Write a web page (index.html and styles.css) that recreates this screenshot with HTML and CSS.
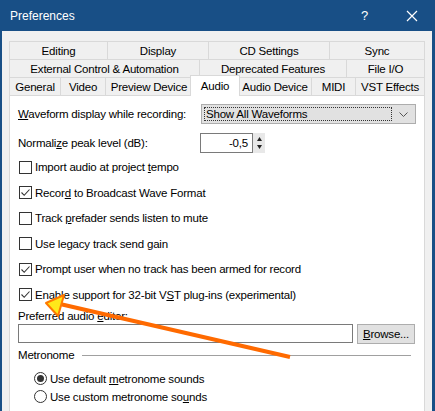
FILE: index.html
```html
<!DOCTYPE html>
<html>
<head>
<meta charset="utf-8">
<link rel="stylesheet" href="styles.css">
</head>
<body>
<div class="window">
  <div class="titlebar">
    <span class="title">Preferences</span>
    <span class="help">?</span>
    <svg class="close" width="12" height="12" viewBox="0 0 12 12"><path d="M1 1L11 11M11 1L1 11" stroke="#fff" stroke-width="1.2" fill="none"/></svg>
  </div>
  <div class="client">
    <div class="tabs">
      <div class="tabrow r1">
        <div class="tab">Editing</div>
        <div class="tab">Display</div>
        <div class="tab">CD Settings</div>
        <div class="tab last">Sync</div>
      </div>
      <div class="tabrow r2">
        <div class="tab">External Control &amp; Automation</div>
        <div class="tab">Deprecated Features</div>
        <div class="tab last">File I/O</div>
      </div>
      <div class="tabrow r3">
        <div class="tab">General</div>
        <div class="tab">Video</div>
        <div class="tab">Preview Device</div>
        <div class="tab sel">Audio</div>
        <div class="tab">Audio Device</div>
        <div class="tab">MIDI</div>
        <div class="tab last">VST Effects</div>
      </div>
    </div>
    <div class="panel">
      <div class="row wave">
        <span class="lbl"><u>W</u>aveform display while recording:</span>
        <div class="select">
          <span class="focus">Show All Waveforms</span>
          <svg class="chev" width="9" height="5" viewBox="0 0 9 5"><path d="M0.5 0.5L4.5 4.5L8.5 0.5" stroke="#555" fill="none"/></svg>
        </div>
      </div>
      <div class="row norm">
        <span class="lbl">Normali<u>z</u>e peak level (dB):</span>
        <div class="num">-0,5</div>
        <div class="spin">
          <svg width="5" height="4" viewBox="0 0 5 4"><path d="M0 4L2.5 0L5 4Z" fill="#222"/></svg>
          <svg width="5" height="4" viewBox="0 0 5 4"><path d="M0 0L2.5 4L5 0Z" fill="#222"/></svg>
        </div>
      </div>
      <div class="checks">
        <div class="chk"><span class="box"></span><span>Import audio at project <u>t</u>empo</span></div>
        <div class="chk"><span class="box on"><svg width="11" height="11" viewBox="0 0 11 11"><path d="M1.5 5.5L4.2 8.3L9.5 2.5" stroke="#333" stroke-width="1.1" fill="none"/></svg></span><span>Recor<u>d</u> to Broadcast Wave Format</span></div>
        <div class="chk"><span class="box"></span><span>Track <u>p</u>refader sends listen to mute</span></div>
        <div class="chk"><span class="box"></span><span>Use le<u>g</u>acy track send gain</span></div>
        <div class="chk"><span class="box on"><svg width="11" height="11" viewBox="0 0 11 11"><path d="M1.5 5.5L4.2 8.3L9.5 2.5" stroke="#333" stroke-width="1.1" fill="none"/></svg></span><span>Prompt user when no track has been armed for record</span></div>
        <div class="chk"><span class="box on"><svg width="11" height="11" viewBox="0 0 11 11"><path d="M1.5 5.5L4.2 8.3L9.5 2.5" stroke="#333" stroke-width="1.1" fill="none"/></svg></span><span>Enable support for 32-bit V<u>S</u>T plug-ins (experimental)</span></div>
      </div>
      <div class="pref-lbl">Preferred audio <u>e</u>ditor:</div>
      <div class="row editor">
        <div class="textbox"></div>
        <div class="btn"><u>B</u>rowse...</div>
      </div>
      <div class="group">
        <span>Metronome</span>
        <span class="gline"></span>
      </div>
      <div class="radios">
        <div class="rad"><span class="circ on"></span><span>Use default <u>m</u>etronome sounds</span></div>
        <div class="rad"><span class="circ"></span><span>Use custom metronome so<u>u</u>nds</span></div>
      </div>
    </div>
  </div>
  <svg class="arrow" width="435" height="411" viewBox="0 0 435 411">
    <line x1="290" y1="357" x2="60" y2="304" stroke="#FF6A00" stroke-width="4"/>
    <path d="M46 303L64 295L58 316Z" fill="#FFE81A" stroke="#FF7A00" stroke-width="2" stroke-linejoin="round"/>
  </svg>
</div>
</body>
</html>
```

FILE: styles.css
```css
* { box-sizing: border-box; }
html, body { margin: 0; padding: 0; }
body {
  font-family: "Liberation Sans", Arial, sans-serif;
  font-size: 11.5px;
  letter-spacing: -0.2px;
  color: #000;
  background: #fff;
}
.window {
  position: relative;
  width: 435px;
  height: 411px;
  overflow: hidden;
  background: #184F86;
  display: flex;
  flex-direction: column;
}
.titlebar {
  height: 31px;
  flex: none;
  display: flex;
  align-items: center;
  color: #fff;
  padding-left: 10px;
}
.title { font-size: 12px; flex: 1; letter-spacing: 0; }
.help { font-size: 13px; margin-right: 38px; }
.close { margin-right: 17px; }
.client {
  flex: 1;
  background: #F0F0F0;
  margin: 0 3px 0 2px;
  padding-top: 10px;
  padding-left: 7px;
}
.tabs { width: 416px; }
.tabrow {
  display: grid;
  height: 18px;
}
.r1 { grid-template-columns: 98px 101px 121px 96px; }
.r2 { grid-template-columns: 190px 147px 79px; }
.r3 { grid-template-columns: 51px 45px 87px 46px 73px 44px 70px; }
.tab {
  border-top: 1px solid #D9D9D9;
  border-left: 1px solid #D9D9D9;
  display: flex;
  align-items: center;
  justify-content: center;
  white-space: nowrap;
  background: #F0F0F0;
}
.tab.last { border-right: 1px solid #D9D9D9; }
.tab.sel {
  position: relative;
  z-index: 2;
  background: #fff;
  margin: -2px -2px -1px -2px;
  border: 1px solid #D9D9D9;
  border-bottom: none;
  padding-bottom: 1px;
}
.panel {
  width: 416px;
  height: 340px;
  background: #fff;
  border: 1px solid #D9D9D9;
  padding: 8px 0 0 8px;
}
.row { display: flex; align-items: center; }
.wave { height: 20px; }
.wave .lbl { width: 183px; }
.select {
  width: 215px;
  height: 20px;
  background: #E1E1E1;
  border: 1px solid #ADADAD;
  display: flex;
  align-items: center;
  padding: 2px;
}
.focus {
  flex: 1;
  height: 14px;
  border: 1px dotted #333;
  display: flex;
  align-items: center;
  padding-left: 1px;
}
.chev { margin: 0 5px 0 7px; }
.norm { height: 20px; margin-top: 9px; }
.norm .lbl { width: 182px; }
.num {
  width: 53px;
  height: 20px;
  border: 1px solid #7A7A7A;
  text-align: right;
  padding: 3px 4px 0 0;
}
.spin {
  width: 12px;
  height: 20px;
  background: #E8E8E8;
  display: flex;
  flex-direction: column;
  align-items: center;
  justify-content: center;
  gap: 4px;
}
.checks { margin-top: 1.5px; }
.chk {
  height: 25.5px;
  display: flex;
  align-items: center;
}
.box {
  width: 13px;
  height: 13px;
  border: 1px solid #333;
  background: #fff;
  margin-left: 1px;
  margin-right: 3px;
  display: flex;
  align-items: center;
  justify-content: center;
}
.pref-lbl { line-height: 15px; margin-top: 1px; }
.editor { margin-top: 0; height: 20px; }
.textbox {
  width: 335px;
  height: 19px;
  border: 1px solid #7A7A7A;
  margin-right: 4px;
}
.btn {
  width: 58px;
  height: 20px;
  background: #E1E1E1;
  border: 1px solid #ADADAD;
  display: flex;
  align-items: center;
  justify-content: center;
}
.group {
  display: flex;
  align-items: center;
  height: 15px;
  margin-top: 4px;
}
.gline {
  flex: none;
  width: 329px;
  height: 1px;
  background: #A0A0A0;
  margin-left: 8px;
}
.radios { margin-top: 7px; padding-left: 16px; }
.rad {
  height: 18px;
  display: flex;
  align-items: center;
}
.circ {
  width: 13px;
  height: 13px;
  border: 1px solid #333;
  border-radius: 50%;
  margin-right: 3px;
  display: flex;
  align-items: center;
  justify-content: center;
}
.circ.on::after {
  content: "";
  width: 7px;
  height: 7px;
  border-radius: 50%;
  background: #333;
}
u { text-decoration: underline; text-underline-offset: 1px; }
.arrow {
  position: absolute;
  left: 0;
  top: 0;
  pointer-events: none;
}
```
